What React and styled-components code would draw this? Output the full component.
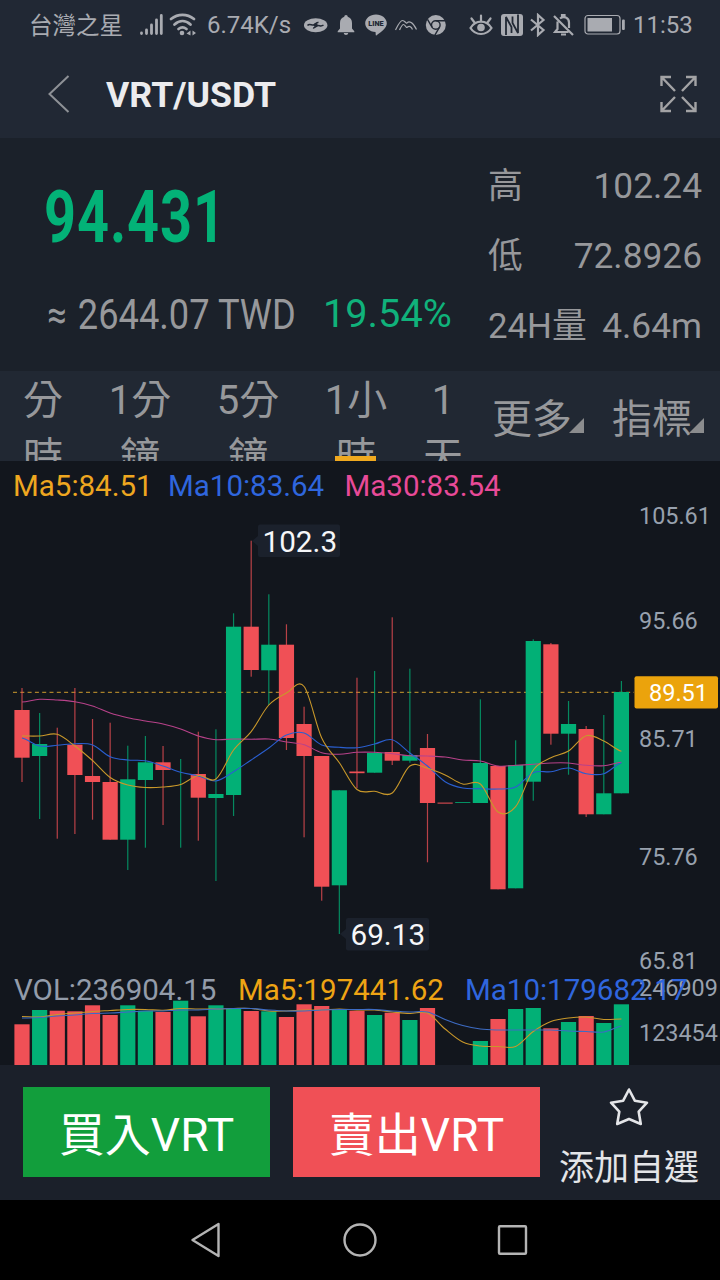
import React from 'react';
import styled, { createGlobalStyle } from 'styled-components';

const GlobalStyle = createGlobalStyle`
  body {
    margin: 0;
    background: #000;
    font-family: Roboto, "Noto Sans CJK TC", sans-serif;
  }
  svg {
    display: block;
  }
`;

const Page = styled.div`
  display: flex;
  flex-direction: column;
  width: 720px;
  height: 1280px;
  overflow: hidden;
  color: #97989b;
`;

// status bar + title

const StatusBar = styled.div`
  display: flex;
  align-items: center;
  height: 50px;
  background: #212834;
  color: #a9abb1;
  font-size: 24px;
  line-height: 50px;
  white-space: nowrap;
`;

const StatusItem = styled.div`
  flex: none;
  width: ${p => p.$w}px;
  margin-left: ${p => p.$gap || 0}px;
`;

const Carrier = styled(StatusItem)`
  padding-top: 2px;
  font-size: 23.5px;
  line-height: 48px;
`;

const Header = styled.div`
  display: flex;
  align-items: center;
  height: 88px;
  padding: 0 22px 0 48px;
  box-sizing: border-box;
  background: #212834;
`;

const Title = styled.h1`
  flex: 1;
  margin: 2px 0 0 36px;
  font-size: 35.7px;
  line-height: 44px;
  font-weight: 700;
  color: #ececee;
`;

// price summary

const Summary = styled.div`
  display: flex;
  justify-content: space-between;
  height: 233px;
  padding: 0 18px 0 44px;
  box-sizing: border-box;
  background: #1b212a;
`;

const PriceColumn = styled.div`
  display: flex;
  flex-direction: column;
  padding-top: 32px;
  white-space: nowrap;
`;

const Price = styled.div`
  font-size: 72px;
  line-height: 96px;
  height: 96px;
  font-weight: 700;
  letter-spacing: 1.2px;
  color: #03b277;
  transform: scaleX(0.775);
  transform-origin: left;
`;

const SubRow = styled.div`
  display: flex;
  align-items: center;
  height: 48px;
  margin-top: 24px;
  line-height: 48px;
`;

const Fiat = styled.div`
  height: 48px;
  width: 279px;
  font-size: 43px;
  transform-origin: left;
  transform: scaleX(0.843);
`;

const Approx = styled.span`
  font-size: 41px;
  line-height: 1;
  margin: 0 13px 0 4px;
`;

const Percent = styled.div`
  font-size: 39.7px;
  color: #10b27b;
`;

const Stats = styled.div`
  display: flex;
  flex-direction: column;
  width: 214px;
  padding-top: 13px;
`;

const Stat = styled.div`
  display: flex;
  justify-content: space-between;
  height: 70px;
  line-height: 70px;
  font-size: 35.3px;
  white-space: nowrap;
`;

const StatLabel = styled.span`
  font-size: 34.8px;
`;

// period tabs

const Tabs = styled.div`
  display: flex;
  height: 90px;
  overflow: hidden;
  background: #212833;
  font-size: 40px;
`;

const Tab = styled.div`
  display: flex;
  flex-direction: column;
  align-items: center;
  position: relative;
  width: ${p => p.$w}px;
  padding-top: 3px;
  line-height: 54px;
  white-space: nowrap;

  span + span {
    padding-top: 3px;
  }

  &::after {
    content: '';
    display: ${p => (p.$active ? 'block' : 'none')};
    position: absolute;
    left: 33px;
    top: 85px;
    width: 41px;
    height: 5px;
    background: #f0a91f;
  }
`;

const Dropdown = styled.div`
  display: flex;
  align-items: flex-start;
  height: 62px;
  margin-left: ${p => p.$gap}px;
  padding-top: 22px;
  line-height: 54px;
  white-space: nowrap;

  &::after {
    content: '';
    margin: 25px 0 0 -3px;
    border-left: 15px solid transparent;
    border-bottom: 15px solid #8b8c8e;
  }
`;

const ChartPanel = styled.div`
  height: 604px;
  background: #12161d;
`;

// bottom actions

const Actions = styled.div`
  display: flex;
  height: 135px;
  padding: 22px 0 0 23px;
  box-sizing: border-box;
  background: #1b202a;
`;

const TradeButton = styled.button`
  width: 247px;
  height: 90px;
  margin: 0 23px 0 0;
  padding: 6px 0 0;
  border: 0;
  background: ${p => p.$color};
  color: #fff;
  font-family: inherit;
  font-size: 46px;
  line-height: 84px;
  white-space: nowrap;
`;

const Favorite = styled.div`
  display: flex;
  flex-direction: column;
  align-items: center;
  width: 140px;
  margin-left: -4px;
  font-size: 35px;
  line-height: 44px;
  color: #e4e5e8;
  white-space: nowrap;

  span {
    margin-top: 20px;
  }
`;

const NavBar = styled.div`
  display: flex;
  align-items: center;
  height: 80px;
  padding-left: 190px;
  gap: 119px;
  background: #000;
`;

const RED = '#f05056';
const GREEN = '#02b076';

// color, open/close top, bottom, high, low (chart y)
const candles = [
  ['r', 710, 757.7, 688, 782],
  ['g', 744, 756, 713, 819],
  ['r', 744, 744.5, 727.7, 838.7],
  ['r', 744.7, 775, 688, 834],
  ['r', 776, 782, 719, 819.7],
  ['r', 782, 839.7, 722.7, 839.7],
  ['g', 779.3, 839.7, 745.7, 870],
  ['g', 762.3, 780, 736, 847.7],
  ['r', 762.3, 770, 746, 825],
  ['g', 770, 770.3, 759, 847.7],
  ['r', 774, 797.7, 731.7, 840.7],
  ['g', 794, 798, 729.3, 881],
  ['g', 626.7, 795, 613.3, 816],
  ['r', 626.7, 670, 540.7, 676.7],
  ['g', 644.7, 670.3, 594.3, 705],
  ['r', 644.7, 738, 624.3, 750],
  ['r', 724, 756, 706.7, 837.3],
  ['r', 756, 886.7, 756, 900.7],
  ['g', 790.3, 885.3, 790.3, 934],
  ['r', 771.5, 773.2, 677.7, 788.3],
  ['g', 753, 772.7, 671, 772.7],
  ['r', 752, 760.7, 617.3, 765],
  ['g', 755, 760.7, 668.7, 762.7],
  ['r', 748, 803, 734, 862.3],
  ['r', 802.6, 803.6, 803, 803],
  ['g', 802.2, 803, 803, 803],
  ['g', 763, 803, 699.3, 803],
  ['r', 766, 889.3, 766, 889.3],
  ['g', 765, 888.3, 740.3, 888.3],
  ['g', 641, 781.7, 639.3, 800.7],
  ['r', 644.3, 733.7, 643, 744.7],
  ['g', 724, 733.7, 701, 774.7],
  ['r', 729, 814.3, 726, 817],
  ['g', 793.3, 814.3, 715, 814.3],
  ['g', 692, 793.3, 681, 793.3],
];

const ma5 = [736, 736, 734.3, 746, 760.5, 777.5, 785, 787.5, 787, 784.5, 775.5, 779, 750, 731.7, 705, 693, 686.5, 738, 762.7, 789.5, 791.3, 793, 766, 768.3, 775, 784, 784, 812, 806.7, 770, 757.7, 751, 735.7, 741, 751.3];
const ma10 = [738, 746, 745.3, 743.7, 745, 756.7, 760, 760.7, 766, 772.3, 776, 781, 771.7, 760, 748, 735, 733, 745, 747.3, 747.7, 744, 739.7, 753, 766, 781.7, 788, 788.7, 789, 787, 772.7, 771.7, 768, 773.7, 773.7, 762.7];
const ma30 = [702, 699.3, 700, 701.7, 706, 713, 717.7, 721, 724, 729, 736, 739.7, 739, 739.3, 739, 742, 744.7, 752.7, 754.3, 752.3, 752.3, 753.7, 755.7, 756, 757, 760, 761, 766, 765.3, 764.3, 763, 763, 765.3, 765.7, 762.3];

const volumes = [
  ['r', 1024.3], ['g', 1010], ['r', 1010.7], ['r', 1011.3], ['r', 1005.3], ['r', 1015],
  ['g', 1005.3], ['g', 1010.7], ['r', 1012], ['g', 1000.7], ['r', 1016.3], ['g', 1005.3],
  ['g', 1009], ['r', 1011], ['g', 1011.3], ['r', 1017], ['r', 1004.3], ['r', 1006],
  ['g', 1009.3], ['r', 1010.7], ['g', 1015], ['r', 1012.7], ['g', 1020], ['r', 1008],
  ['r', 1065], ['g', 1065], ['g', 1041], ['r', 1019], ['g', 1009], ['g', 1008],
  ['r', 1028.3], ['g', 1022], ['r', 1016], ['g', 1023], ['g', 1004.3],
];
const volMa5 = [1016.5, 1017, 1014.5, 1013, 1011.5, 1010.5, 1009.5, 1009.5, 1010.3, 1008.5, 1009, 1009, 1008.5, 1008.5, 1011, 1011, 1010, 1010, 1009, 1010, 1010, 1012, 1013.5, 1013, 1029, 1042, 1046, 1046.5, 1046.5, 1031.5, 1021.5, 1018, 1017, 1019.5, 1019];
const volMa10 = [1018, 1017.5, 1016, 1015, 1013.5, 1013, 1012, 1011, 1011, 1010, 1010, 1009, 1008.5, 1008.5, 1010, 1011, 1011, 1010, 1009.5, 1009.5, 1009.5, 1011, 1012, 1012, 1019.5, 1025.5, 1029, 1030, 1030, 1030, 1030, 1031, 1031.5, 1032, 1026];

const cx = i => 22 + i * 17.63;
const fill = c => (c === 'r' ? RED : GREEN);

function smooth(ys) {
  const at = i => ys[Math.max(0, Math.min(ys.length - 1, i))];
  let d = `M${cx(0)} ${ys[0]}`;
  for (let i = 0; i < ys.length - 1; i++) {
    const c1 = at(i) + (at(i + 1) - at(i - 1)) / 6;
    const c2 = at(i + 1) - (at(i + 2) - at(i)) / 6;
    d += ` C${cx(i) + 5.9} ${c1} ${cx(i + 1) - 5.9} ${c2} ${cx(i + 1)} ${at(i + 1)}`;
  }
  return d;
}

const Line = styled.path`
  fill: none;
  stroke: ${p => p.$color};
  stroke-width: 1.1;
`;

const Legend = styled.text`
  font-size: 29.5px;
  fill: ${p => p.$color};
`;

const AxisLabel = styled.text`
  font-size: 23.4px;
  fill: #98a1ae;
`;

const Callout = styled.text`
  font-size: 29.7px;
  fill: #f6f7f9;
`;

function Chart() {
  return (
    <svg width="720" height="604" viewBox="0 461 720 604">
      <path d="M13 692.3H634" stroke="#a8812a" strokeWidth="1.2" strokeDasharray="4 3.3" />

      {candles.map(([c, top, bottom, high, low], i) => (
        <g key={i} fill={fill(c)}>
          <rect x={cx(i) - 0.6} y={high} width="1.2" height={low - high} opacity="0.75" />
          {bottom - top > 0.6 && (
            <rect x={cx(i) - 7.6} y={top} width="15.2" height={bottom - top} />
          )}
        </g>
      ))}

      <Line $color="#b8428a" d={smooth(ma30)} />
      <Line $color="#2a5fd0" d={smooth(ma10)} />
      <Line $color="#c9982a" d={smooth(ma5)} />

      <Legend x="13" y="495.8" $color="#eea720">Ma5:84.51</Legend>
      <Legend x="168" y="495.8" $color="#2f66de">Ma10:83.64</Legend>
      <Legend x="344.5" y="495.8" $color="#e84a98">Ma30:83.54</Legend>

      <path d="M252 541l6-5v10z" fill="#1b212c" />
      <rect x="258" y="524.5" width="82" height="32.5" rx="2" fill="#1b212c" />
      <Callout x="262.5" y="552">102.3</Callout>
      <path d="M340 934l6-5v10z" fill="#1b212c" />
      <rect x="346" y="918" width="83" height="32.5" rx="2" fill="#1b212c" />
      <Callout x="350.5" y="945">69.13</Callout>

      <AxisLabel x="639" y="524">105.61</AxisLabel>
      <AxisLabel x="639" y="629">95.66</AxisLabel>
      <AxisLabel x="639" y="746.7">85.71</AxisLabel>
      <AxisLabel x="639" y="864.5">75.76</AxisLabel>
      <AxisLabel x="639" y="968.7">65.81</AxisLabel>

      <rect x="634.5" y="676.3" width="83.5" height="32.2" rx="2" fill="#eba30c" />
      <text x="649" y="701.2" fontSize="23.5" fill="#fff">89.51</text>

      {volumes.map(([c, top], i) => (
        <rect key={i} x={cx(i) - 7.6} y={top} width="15.2" height={1065 - top} fill={fill(c)} />
      ))}
      <Line $color="#c9982a" d={smooth(volMa5)} />
      <Line $color="#3d6cc4" d={smooth(volMa10)} />

      <Legend x="14" y="999.8" $color="#939caa">VOL:236904.15</Legend>
      <Legend x="238" y="999.8" $color="#eea414">Ma5:197441.62</Legend>
      <AxisLabel x="639" y="996">246909</AxisLabel>
      <AxisLabel x="639" y="1041.3">123454</AxisLabel>
      <Legend x="465" y="999.8" $color="#2f66de">Ma10:179682.17</Legend>
    </svg>
  );
}

function Status() {
  const c = '#a9abb1';
  const bg = '#212834';
  return (
    <StatusBar>
      <Carrier $w={93} $gap={29}>台灣之星</Carrier>
      <StatusItem $w={24} $gap={17}>
        <svg width="24" height="24" viewBox="0 0 24 24" stroke={c} strokeWidth="2.8" strokeLinecap="round">
          <path d="M2.5 20v.5M7.5 17v3.5M12.5 12v8.500M17.5 7v13.500M22.300 2.500v18" />
        </svg>
      </StatusItem>
      <StatusItem $w={28} $gap={6}>
        <svg width="28" height="24" viewBox="0 0 28 24" fill="none" stroke={c} strokeWidth="2.8" strokeLinecap="round">
          <path d="M2 6c7-5.500 16-5.500 23 0M5.500 11.500c5-4.500 11-4.500 16 0M9.500 16c2.500-2 5.500-2 8 0" />
          <circle cx="13" cy="20" r="2.3" fill={c} stroke="none" />
          <path d="M21.500 17.500v5l-4-2zM23.500 17.500v5l3.500-2.500z" fill={c} stroke="none" />
        </svg>
      </StatusItem>
      <StatusItem $w={84} $gap={10}>6.74K/s</StatusItem>
      <StatusItem $w={24} $gap={13}>
        <svg width="24" height="24" viewBox="0 0 24 24">
          <ellipse cx="11.7" cy="12.3" rx="11.7" ry="7" fill={c} />
          <path d="M3.500 12.500c2-2.500 4 0 6-.5s3-3 5-2.500M9 15c2 .5 3-2.500 5-2.500s3 1.500 5.500-.5" fill="none" stroke={bg} strokeWidth="1.5" />
          <circle cx="11.8" cy="12.3" r="2" fill={bg} />
        </svg>
      </StatusItem>
      <StatusItem $w={18} $gap={9}>
        <svg width="18" height="24" viewBox="0 0 18 24" fill={c}>
          <path d="M9 2c1 0 1.700.7 1.700 1.800C13.600 4.600 15 7 15 10v5.500l2.300 2.800v1H.7v-1L3 15.500V10c0-3 1.400-5.400 4.300-6.200C7.300 2.700 8 2 9 2zM6.800 20h4.400c0 1.200-1 2-2.200 2s-2.200-.8-2.200-2z" />
        </svg>
      </StatusItem>
      <StatusItem $w={22} $gap={10}>
        <svg width="22" height="24" viewBox="0 0 22 24">
          <path d="M11 1.500c6 0 10.800 4 10.800 8.800 0 4-4 7.700-10.500 12.200-.8.400-.5-1.500-.8-3.400C4.500 18.800.2 15 .2 10.300.2 5.500 5 1.500 11 1.500z" fill={c} />
          <text x="11" y="12.8" textAnchor="middle" fontSize="7.3" fontWeight="900" fill={bg}>LINE</text>
        </svg>
      </StatusItem>
      <StatusItem $w={22} $gap={8}>
        <svg width="22" height="24" viewBox="0 0 22 24" fill="none" stroke={c} strokeWidth="1.2">
          <path d="M.5 17C3 12 5 7.500 7.500 7.500S11 11 12 10c2-2.500 6-1 9.500 6.500M4.500 17c1.500-3 2.500-5.500 4-5.500s2.500 4 4 2.500c1.500-1 3.500-1 5 2.500" />
        </svg>
      </StatusItem>
      <StatusItem $w={22} $gap={8}>
        <svg width="22" height="24" viewBox="0 0 22 24">
          <circle cx="10.8" cy="12" r="10" fill={c} />
          <g fill="none" stroke={bg} strokeWidth="1.4">
            <circle cx="10.8" cy="12" r="4.3" />
            <path d="M10.800 7.700H20M7 14.100L2.500 6.300M14.500 14.100l-4.600 8" />
          </g>
        </svg>
      </StatusItem>
      <StatusItem $w={24} $gap={22}>
        <svg width="24" height="24" viewBox="0 0 24 24" fill="none" stroke={c} strokeWidth="2.2">
          <path d="M1.500 15c5-8.500 16-8.500 21 0-5 8-16 8-21 0zM12 8V2.500M5.500 9.500l-3-4M18.500 9.500l3-4" strokeLinecap="round" />
          <circle cx="12" cy="14.5" r="3.8" fill={c} stroke="none" />
        </svg>
      </StatusItem>
      <StatusItem $w={22} $gap={8}>
        <svg width="22" height="24" viewBox="0 0 22 24">
          <rect x="0" y="1" width="22" height="22" rx="3" fill={c} />
          <path d="M5 22V4l5.500 10v6M17 1.500V20L11.500 10V3.500" fill="none" stroke={bg} strokeWidth="1.8" />
        </svg>
      </StatusItem>
      <StatusItem $w={16} $gap={7}>
        <svg width="16" height="24" viewBox="0 0 16 24" fill="none" stroke={c} strokeWidth="2.2">
          <path d="M1 6.500l12.500 10.500L8 22V2l5.500 5L1 17.500" />
        </svg>
      </StatusItem>
      <StatusItem $w={21} $gap={7}>
        <svg width="21" height="24" viewBox="0 0 21 24" fill="none" stroke={c} strokeWidth="2.2">
          <path d="M1 3l19 19M4.500 8.500V16L2 19h13.500M7 5.500c3.500-3 9-1 9 4V15" />
          <path d="M9 4V2h2.500v2M8 21.500h5" />
        </svg>
      </StatusItem>
      <StatusItem $w={42} $gap={10}>
        <svg width="42" height="24" viewBox="0 0 42 24">
          <rect x="1" y="2.5" width="35" height="18.5" rx="3" fill="none" stroke={c} strokeWidth="1.2" />
          <rect x="3.5" y="5" width="24.5" height="13.5" fill={c} />
          <rect x="38" y="6.5" width="2.8" height="10.5" rx="1" fill={c} />
        </svg>
      </StatusItem>
      <StatusItem $w={60} $gap={7}>11:53</StatusItem>
    </StatusBar>
  );
}

export default function App() {
  return (
    <Page>
      <GlobalStyle />
      <Status />

      <Header>
        <svg width="22" height="38" viewBox="0 0 22 38" fill="none" stroke="#8e9196" strokeWidth="2">
          <path d="M20.500 1L1.500 19l19 18" />
        </svg>
        <Title>VRT/USDT</Title>
        <svg width="40" height="40" viewBox="0 0 40 40" fill="none" stroke="#a3a3a5" strokeWidth="2.4">
          <path d="M3.500 12V3h9.500M3.500 3L17 17M28 3h9.500v9M37.500 3L24 17M3.500 28v9h9.500M3.500 37L17 23M28 37h9.500v-9M37.500 37L24 23" />
        </svg>
      </Header>

      <Summary>
        <PriceColumn>
          <Price>94.431</Price>
          <SubRow>
            <Fiat><Approx>≈</Approx>2644.07 TWD</Fiat>
            <Percent>19.54%</Percent>
          </SubRow>
        </PriceColumn>
        <Stats>
          <Stat><StatLabel>高</StatLabel><span>102.24</span></Stat>
          <Stat><StatLabel>低</StatLabel><span>72.8926</span></Stat>
          <Stat><StatLabel>24H量</StatLabel><span>4.64m</span></Stat>
        </Stats>
      </Summary>

      <Tabs>
        <Tab $w={86}><span>分</span><span>時</span></Tab>
        <Tab $w={108}><span>1分</span><span>鐘</span></Tab>
        <Tab $w={108}><span>5分</span><span>鐘</span></Tab>
        <Tab $w={108} $active><span>1小</span><span>時</span></Tab>
        <Tab $w={66}><span>1</span><span>天</span></Tab>
        <Dropdown $gap={16}>更多</Dropdown>
        <Dropdown $gap={28}>指標</Dropdown>
      </Tabs>

      <ChartPanel>
        <Chart />
      </ChartPanel>

      <Actions>
        <TradeButton $color="#129e3c">買入VRT</TradeButton>
        <TradeButton $color={RED}>賣出VRT</TradeButton>
        <Favorite>
          <svg width="40" height="40" viewBox="0 0 40 40" fill="none" stroke="#e4e5e8" strokeWidth="2.6" strokeLinejoin="round">
            <path d="M20 2.500l5.800 11.200 12.200 2-8.300 9L31.800 37 20 32 8.200 37l2.100-12.300-8.300-9 12.200-2z" />
          </svg>
          <span>添加自選</span>
        </Favorite>
      </Actions>

      <NavBar>
        <svg width="31" height="36" viewBox="0 0 31 36" fill="none" stroke="#b4b4b4" strokeWidth="2.4" strokeLinejoin="round">
          <path d="M28.500 2v32L2.500 18z" />
        </svg>
        <svg width="38" height="36" viewBox="0 0 38 36" fill="none" stroke="#b4b4b4" strokeWidth="2.4">
          <circle cx="20" cy="18" r="15.5" />
        </svg>
        <svg width="31" height="36" viewBox="0 0 31 36" fill="none" stroke="#b4b4b4" strokeWidth="2.4">
          <rect x="2" y="4.3" width="27" height="27.5" rx="1" />
        </svg>
      </NavBar>
    </Page>
  );
}
